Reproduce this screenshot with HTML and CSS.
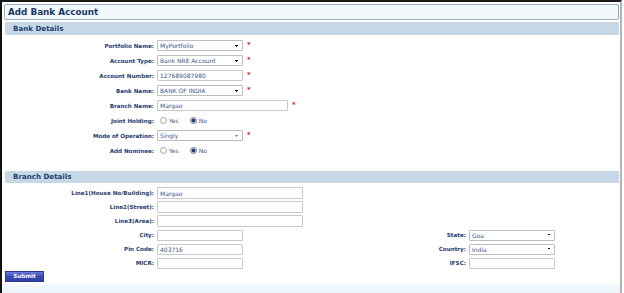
FILE: index.html
```html
<!DOCTYPE html>
<html lang="en">
<head>
    <meta charset="UTF-8">
    <meta name="viewport" content="width=device-width, initial-scale=1.0">
    <title>Add Bank Account</title>
    <link rel="stylesheet" href="styles.css">
</head>
<body>
    <div class="page">
        <h1 class="title">Add Bank Account</h1>

        <h2 class="section">Bank Details</h2>
        <div class="bank-form">
            <div class="row">
                <label>Portfolio Name:</label>
                <div class="field">
                    <select class="sel"><option>MyPortfolio</option></select>
                    <span class="req">*</span>
                </div>
            </div>
            <div class="row">
                <label>Account Type:</label>
                <div class="field">
                    <select class="sel"><option>Bank NRE Account</option></select>
                    <span class="req">*</span>
                </div>
            </div>
            <div class="row">
                <label>Account Number:</label>
                <div class="field">
                    <input type="text" class="txt" value="127689087980">
                    <span class="req">*</span>
                </div>
            </div>
            <div class="row">
                <label>Bank Name:</label>
                <div class="field">
                    <select class="sel"><option>BANK OF INDIA</option></select>
                    <span class="req">*</span>
                </div>
            </div>
            <div class="row">
                <label>Branch Name:</label>
                <div class="field">
                    <input type="text" class="txt wide" value="Margao">
                    <span class="req">*</span>
                </div>
            </div>
            <div class="row">
                <label>Joint Holding:</label>
                <div class="field radios">
                    <input type="radio" name="joint" id="jy"><label for="jy">Yes</label>
                    <input type="radio" name="joint" id="jn" checked><label for="jn">No</label>
                </div>
            </div>
            <div class="row">
                <label>Mode of Operation:</label>
                <div class="field">
                    <select class="sel dim"><option>Singly</option></select>
                    <span class="req">*</span>
                </div>
            </div>
            <div class="row">
                <label>Add Nominee:</label>
                <div class="field radios">
                    <input type="radio" name="nom" id="ny"><label for="ny">Yes</label>
                    <input type="radio" name="nom" id="nn" checked><label for="nn">No</label>
                </div>
            </div>
        </div>

        <h2 class="section branch">Branch Details</h2>
        <div class="branch-form">
            <label>Line1(House No/Building):</label>
            <input type="text" class="txt long" value="Margao">
            <span></span><span></span>

            <label>Line2(Street):</label>
            <input type="text" class="txt long">
            <span></span><span></span>

            <label>Line3(Area):</label>
            <input type="text" class="txt long">
            <span></span><span></span>

            <label>City:</label>
            <input type="text" class="txt">
            <label>State:</label>
            <select class="sel"><option>Goa</option></select>

            <label>Pin Code:</label>
            <input type="text" class="txt" value="403716">
            <label>Country:</label>
            <select class="sel"><option>India</option></select>

            <label>MICR:</label>
            <input type="text" class="txt">
            <label>IFSC:</label>
            <input type="text" class="txt">
        </div>

        <button class="submit">Submit</button>
        <div class="footer"></div>
    </div>
</body>
</html>
```

FILE: styles.css
```css
body {
    margin: 0;
    font-family: "DejaVu Sans", Verdana, sans-serif;
    background: #fff;
}

.page {
    width: 618px;
    height: 291px;
    border-top: 2px solid #1a1a1a;
    border-left: 2px solid #111;
    border-right: 2px solid #b4b4b4;
    display: flex;
    flex-direction: column;
}

.title {
    margin: 2px 1px 0 2px;
    height: 16px;
    box-sizing: border-box;
    border: 1px solid #97abbe;
    border-radius: 2px;
    background: #f2f7fc;
    color: #1b3766;
    font-size: 8.8px;
    font-weight: bold;
    line-height: 14px;
    padding-left: 3px;
}

.section {
    margin: 2px 1px 0 3px;
    height: 13px;
    background: #c6d8e6;
    border-radius: 2px 0 0 2px;
    color: #1f3f73;
    font-size: 7.1px;
    font-weight: bold;
    line-height: 13px;
    padding-left: 8px;
}

.section.branch {
    margin-top: 13px;
    height: 12px;
    line-height: 12px;
}

label {
    color: #1f3c70;
    font-size: 5.6px;
    font-weight: bold;
}

.bank-form {
    padding-top: 3px;
}

.row {
    display: grid;
    grid-template-columns: 152px 1fr;
    column-gap: 3px;
    height: 15px;
    align-items: center;
}

.row > label {
    text-align: right;
}

.field {
    display: flex;
    align-items: center;
    gap: 4px;
}

.txt, .sel {
    width: 86px;
    height: 11px;
    box-sizing: border-box;
    margin: 0;
    border: 1px solid #c9c9c9;
    border-radius: 1px;
    background-color: #fff;
    color: #3d5886;
    font-family: "DejaVu Sans", Verdana, sans-serif;
    font-size: 6px;
    padding: 0 2px;
    outline: none;
}

.sel {
    appearance: none;
    border-color: #bdbdbd;
    background-image: linear-gradient(45deg, transparent 50%, #111 50%),
                      linear-gradient(135deg, #111 50%, transparent 50%);
    background-position: right 5px center, right 3px center;
    background-size: 2px 2px, 2px 2px;
    background-repeat: no-repeat;
    line-height: 9px;
}

.sel.dim {
    background-image: linear-gradient(45deg, transparent 50%, #999 50%),
                      linear-gradient(135deg, #999 50%, transparent 50%);
}

.txt.wide {
    width: 131px;
}

.txt.long {
    width: 146px;
    height: 12px;
}

.req {
    color: #e0202a;
    font-size: 7px;
    font-weight: bold;
    line-height: 7px;
}

.radios {
    gap: 0;
    padding-left: 3px;
}

.radios input {
    appearance: none;
    width: 7px;
    height: 7px;
    margin: 0 2px 0 0;
    border: 1px solid #a8a8a8;
    border-radius: 50%;
    background: radial-gradient(circle, #fff 40%, #e4e4e4 100%);
}

.radios input:checked {
    border-color: #6f8195;
    background: radial-gradient(circle, #22406a 0 1.6px, #c9d4e0 2.2px);
}

.radios label {
    font-weight: normal;
    font-size: 6px;
    color: #3d5886;
    margin-right: 11px;
}

.branch-form {
    display: grid;
    grid-template-columns: 152px 146px 160px 86px;
    grid-auto-rows: 14px;
    column-gap: 3px;
    align-items: center;
    padding-top: 3px;
}

.branch-form label {
    text-align: right;
}

.submit {
    align-self: flex-start;
    margin: 1px 0 0 3px;
    width: 39px;
    height: 11px;
    padding: 0;
    border: 1px solid #2a3592;
    background: linear-gradient(#6c7ad6, #3c4bb4 50%, #2f3da4);
    color: #fff;
    font-family: "DejaVu Sans", Verdana, sans-serif;
    font-size: 5.6px;
    font-weight: bold;
    line-height: 9px;
}

.footer {
    margin-top: 2px;
    flex: 1;
    background: linear-gradient(#f3f8fc, #eaf3fa);
}
```
